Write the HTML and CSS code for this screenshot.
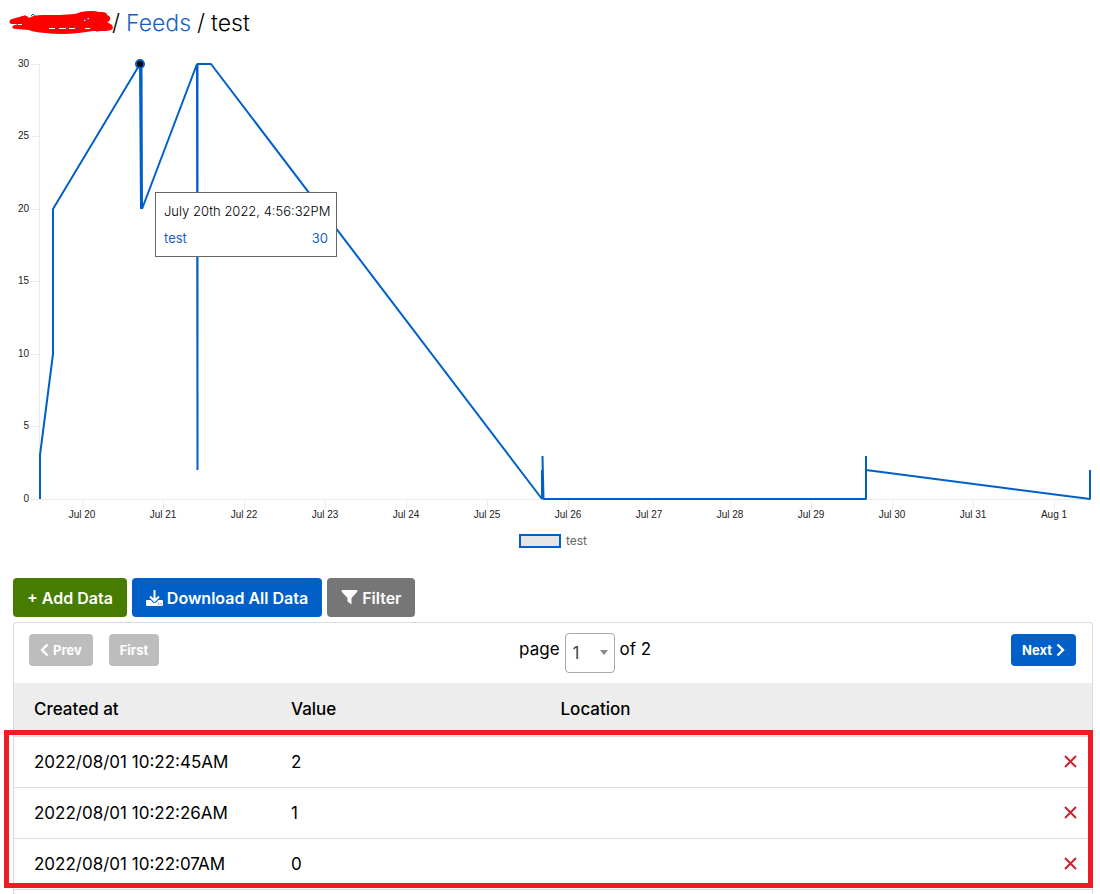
FILE: index.html
```html
<!DOCTYPE html>
<html lang="en">
<head>
<meta charset="utf-8">
<title>Feeds / test</title>
<link rel="stylesheet" href="styles.css">
</head>
<body>
<nav class="crumbs" aria-label="Breadcrumb">
  <svg class="scribble" width="105" height="26" viewBox="0 0 105 26" aria-hidden="true">
    <path stroke="#2b50d8" fill="none" d="M22 6l2-2 2 2M12 8.500h4"/>
    <path fill="#f00" d="M1 12 Q0 10 3 9 L14 6 Q18 5 20 8 Q24 5 34 5 L50 5 L66 4 L72 2 Q82 0 90 2 Q99 2 98 5 Q102 6 101 10 L98 12 L103 15 L104 18 Q102 21 96 21 L84 21 L70 23 Q52 25 36 23 Q24 22 20 20 L7 19 Q2 18 4 16 L9 14 L2 14 Z"/>
    <path fill="none" stroke="#f00" stroke-width="3" stroke-linecap="round" d="M2 12l14-5M5 17l16-3M84 3l11 1M90 8l9 2M88 20l14-2"/>
    <path fill="none" stroke="#fff" d="M9 14.500h4M40 18.500h6M50 18.500h7M60 18.500h6M75 10.500l5-2M76 18.500h5"/>
    <path stroke="#2b50d8" d="M48.500 17v3M58.500 17v3M67.500 17v3M76 9.500h3"/>
  </svg>
  <span>/</span>
  <a href="#">Feeds</a>
  <span>/</span>
  <span>test</span>
</nav>

<section class="chart">
  <div class="plot">
    <svg class="graph" viewBox="0 0 1100 480" role="img" aria-label="Values of test over time">
      <path class="axis" d="M39.500 18V453M31 18.500h8M31 90.500h8M31 163.500h8M31 235.500h8M31 308.500h8M31 380.500h8M31 453.500H1090M82.500 453v10M163.500 453v10M244.500 453v10M325.500 453v10M406.500 453v10M487.500 453v10M568.500 453v10M649.500 453v10M730.500 453v10M811.500 453v10M892.500 453v10M973.500 453v10M1054.500 453v10"/>
      <g class="labels labels-y">
        <text x="29" y="21">30</text><text x="29" y="93">25</text><text x="29" y="166">20</text><text x="29" y="238">15</text><text x="29" y="311">10</text><text x="29" y="383">5</text><text x="29" y="456">0</text>
      </g>
      <g class="labels labels-x">
        <text x="82" y="472">Jul 20</text><text x="163" y="472">Jul 21</text><text x="244" y="472">Jul 22</text><text x="325" y="472">Jul 23</text><text x="406" y="472">Jul 24</text><text x="487" y="472">Jul 25</text><text x="568" y="472">Jul 26</text><text x="649" y="472">Jul 27</text><text x="730" y="472">Jul 28</text><text x="811" y="472">Jul 29</text><text x="892" y="472">Jul 30</text><text x="973" y="472">Jul 31</text><text x="1054" y="472">Aug 1</text>
      </g>
      <path class="series" d="M40 453V409L53 308V163L140 18L141 163L141.500 18L142 163L197 18L197.500 424V18H211L542 453V424L543 453L542.500 410L543.500 453H866V410V424L1090 453V424"/>
      <circle class="point" cx="140" cy="18" r="4"/>
    </svg>
    <div class="tooltip" role="tooltip">
      <div>July 20th 2022, 4:56:32PM</div>
      <div class="tooltip-row"><span>test</span><span>30</span></div>
    </div>
  </div>
  <div class="legend"><span class="swatch"></span>test</div>
</section>

<div class="actions">
  <button class="btn green" type="button">+ Add Data</button>
  <button class="btn blue" type="button">
    <svg width="17" height="16" viewBox="0 0 17 16" aria-hidden="true"><path fill="#fff" fill-rule="evenodd" d="M1 10h3.500l3 3h2l3-3H16q1 0 1 1v4q0 1-1 1H1q-1 0-1-1v-4q0-1 1-1ZM12 13.500v1h1v-1ZM14.500 13.500v1h1v-1Z"/><path fill="none" stroke="#fff" stroke-width="2" d="M8.500 0v11M4 6.500l4.500 4.500L13 6.500"/></svg>
    Download All Data
  </button>
  <button class="btn gray" type="button">
    <svg width="17" height="15" viewBox="0 0 17 15" aria-hidden="true"><path fill="#fff" d="M1 0h15q1 1 0 2L10.500 8v6.500L6.500 11.500V8L1 2Q0 1 1 0Z"/></svg>
    Filter
  </button>
</div>

<main class="panel">
  <div class="pager">
    <div class="pager-side">
      <button class="btn small" type="button" disabled><svg width="9" height="14" viewBox="0 0 9 14" aria-hidden="true"><path fill="none" stroke="#fff" stroke-width="2.400" d="M7.500 1.500L2 7l5.500 5.500"/></svg>Prev</button>
      <button class="btn small" type="button" disabled>First</button>
    </div>
    <div class="pager-page">
      <label for="page">page</label>
      <span class="select"><select id="page"><option>1</option><option>2</option></select></span>
      <span>of 2</span>
    </div>
    <div class="pager-side">
      <button class="btn small blue" type="button">Next<svg width="9" height="14" viewBox="0 0 9 14" aria-hidden="true"><path fill="none" stroke="#fff" stroke-width="2.400" d="M1.500 1.500L7 7l-5.500 5.500"/></svg></button>
    </div>
  </div>
  <div class="data">
    <table>
      <thead>
        <tr><th class="col-date">Created at</th><th class="col-value">Value</th><th>Location</th><th class="col-del"></th></tr>
      </thead>
      <tbody>
        <tr><td>2022/08/01 10:22:45AM</td><td>2</td><td></td><td class="col-del"><button class="del" type="button" aria-label="Delete"><svg width="13" height="13" viewBox="0 0 13 13"><path d="M1 1l11 11M12 1L1 12"/></svg></button></td></tr>
        <tr><td>2022/08/01 10:22:26AM</td><td>1</td><td></td><td class="col-del"><button class="del" type="button" aria-label="Delete"><svg width="13" height="13" viewBox="0 0 13 13"><path d="M1 1l11 11M12 1L1 12"/></svg></button></td></tr>
        <tr><td>2022/08/01 10:22:07AM</td><td>0</td><td></td><td class="col-del"><button class="del" type="button" aria-label="Delete"><svg width="13" height="13" viewBox="0 0 13 13"><path d="M1 1l11 11M12 1L1 12"/></svg></button></td></tr>
      </tbody>
    </table>
    <div class="highlight"></div>
  </div>
</main>
</body>
</html>
```
FILE: styles.css
```css
* { box-sizing: border-box; }
body { margin: 0; background: #fff; color: #000; font: 17px/24px Inter, "Liberation Sans", sans-serif; }
button, select { font: inherit; }

.crumbs { display: flex; align-items: center; gap: 6px; height: 46px; padding-left: 9px; font-size: 23px; font-weight: 300; }
.crumbs a { color: #1a5fc4; text-decoration: none; }
.scribble { margin-right: -8px; }

.plot { position: relative; }
.graph { display: block; width: 100%; height: auto; }
.axis { fill: none; stroke: #ebebeb; }
.labels { font: 10px "Liberation Sans", sans-serif; fill: #222; }
.labels-y { text-anchor: end; }
.labels-x { text-anchor: middle; }
.series { fill: none; stroke: #0060c7; stroke-width: 2; stroke-linejoin: bevel; }
.point { fill: #000; stroke: #0060c7; stroke-width: 2; }
.tooltip { position: absolute; left: 155px; top: 146px; width: 182px; height: 65px; padding: 8px; background: #fff; border: 1px solid #666; font-size: 13px; font-weight: 300; line-height: 20px; white-space: nowrap; }
.tooltip-row { display: flex; justify-content: space-between; margin-top: 7px; color: #1a5fc4; font-weight: 400; }
.legend { display: flex; align-items: center; justify-content: center; gap: 5px; height: 30px; padding-left: 6px; font-size: 12px; color: #666; }
.swatch { width: 42px; height: 14px; border: 2px solid #0060c7; background: #e5e5e5; }

.actions { display: flex; gap: 5px; padding: 22px 13px 5px; }
.btn { display: flex; align-items: center; justify-content: center; gap: 4px; height: 39px; padding: 0 14px; border: 0; border-radius: 4px; color: #fff; font-size: 16px; font-weight: 600; white-space: nowrap; }
.btn.green { background: #467c00; }
.btn.gray { background: #767676; }
.small { height: 32px; padding: 0 11px; background: #bdbdbd; font-size: 13px; font-weight: 700; }
.btn.blue { background: #0060c7; }

.panel { margin: 0 7px 0 13px; border: 1px solid #dcdcdc; border-bottom: 0; border-radius: 4px 4px 0 0; }
.pager { display: flex; align-items: flex-start; justify-content: space-between; height: 60px; padding: 10px 16px 0 15px; }
.pager-side { display: flex; gap: 16px; padding-top: 1px; }
.pager-page { display: flex; gap: 5px; line-height: 32px; }
.select { position: relative; display: block; }
.select::after { content: ""; position: absolute; right: 7px; top: 17px; border: 4px solid transparent; border-top: 5px solid #888; border-bottom: 0; pointer-events: none; }
select { display: block; width: 50px; height: 40px; padding: 0 7px; appearance: none; background: #fff; border: 1px solid #aaa; border-radius: 4px; color: #444; }

.data { position: relative; padding-bottom: 4px; }
table { width: 100%; border-collapse: collapse; table-layout: fixed; }
th, td { height: 51px; padding: 0 20px; border-bottom: 1px solid #dcdcdc; text-align: left; font-weight: 400; white-space: nowrap; }
th { height: 53px; background: #ededed; font-weight: 500; }
.col-date { width: 257px; }
.col-value { width: 25%; }
.col-del { width: 60px; padding: 0 15px; text-align: right; }
.del { display: block; margin-left: auto; padding: 0; border: 0; background: none; }
.del svg { display: block; fill: none; stroke: #cf202f; stroke-width: 2; }
.highlight { position: absolute; left: -10px; right: -1px; top: 47px; bottom: 6px; border: 5px solid #ef1c23; pointer-events: none; }
```
